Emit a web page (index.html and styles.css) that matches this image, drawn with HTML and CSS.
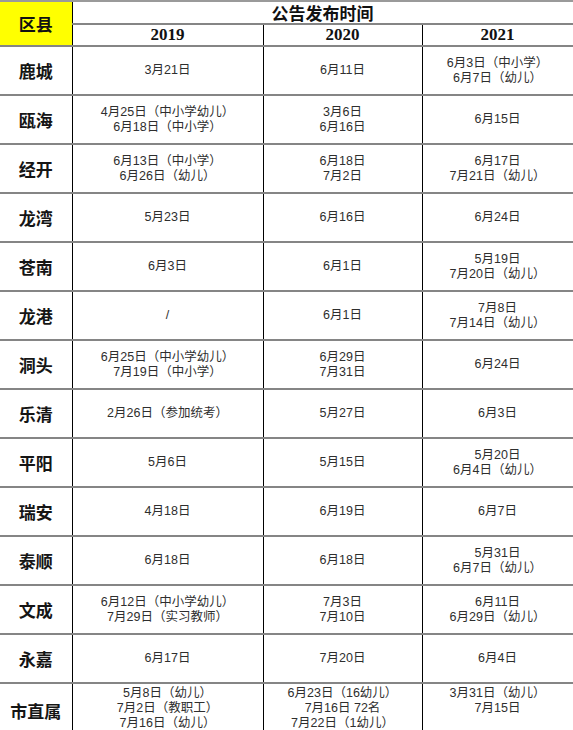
FILE: index.html
```html
<!DOCTYPE html>
<html lang="zh">
<head>
<meta charset="utf-8">
<title>公告发布时间</title>
<link rel="stylesheet" href="styles.css">
</head>
<body>
<table class="sched">
  <colgroup>
    <col class="c-area"><col class="c-y1"><col class="c-y2"><col class="c-y3">
  </colgroup>
  <thead>
    <tr class="h1">
      <th class="area-head" rowspan="2">区县</th>
      <th class="title" colspan="3">公告发布时间</th>
    </tr>
    <tr class="h2">
      <th class="year">2019</th>
      <th class="year">2020</th>
      <th class="year">2021</th>
    </tr>
  </thead>
  <tbody>
    <tr class="row"><th class="area">鹿城</th><td>3月21日</td><td>6月11日</td><td>6月3日（中小学）<br>6月7日（幼儿）</td></tr>
    <tr class="row"><th class="area">瓯海</th><td>4月25日（中小学幼儿）<br>6月18日（中小学）</td><td>3月6日<br>6月16日</td><td>6月15日</td></tr>
    <tr class="row"><th class="area">经开</th><td>6月13日（中小学）<br>6月26日（幼儿）</td><td>6月18日<br>7月2日</td><td>6月17日<br>7月21日（幼儿）</td></tr>
    <tr class="row"><th class="area">龙湾</th><td>5月23日</td><td>6月16日</td><td>6月24日</td></tr>
    <tr class="row"><th class="area">苍南</th><td>6月3日</td><td>6月1日</td><td>5月19日<br>7月20日（幼儿）</td></tr>
    <tr class="row"><th class="area">龙港</th><td>/</td><td>6月1日</td><td>7月8日<br>7月14日（幼儿）</td></tr>
    <tr class="row"><th class="area">洞头</th><td>6月25日（中小学幼儿）<br>7月19日（中小学）</td><td>6月29日<br>7月31日</td><td>6月24日</td></tr>
    <tr class="row"><th class="area">乐清</th><td>2月26日（参加统考）</td><td>5月27日</td><td>6月3日</td></tr>
    <tr class="row"><th class="area">平阳</th><td>5月6日</td><td>5月15日</td><td>5月20日<br>6月4日（幼儿）</td></tr>
    <tr class="row"><th class="area">瑞安</th><td>4月18日</td><td>6月19日</td><td>6月7日</td></tr>
    <tr class="row"><th class="area">泰顺</th><td>6月18日</td><td>6月18日</td><td>5月31日<br>6月7日（幼儿）</td></tr>
    <tr class="row"><th class="area">文成</th><td>6月12日（中小学幼儿）<br>7月29日（实习教师）</td><td>7月3日<br>7月10日</td><td>6月11日<br>6月29日（幼儿）</td></tr>
    <tr class="row"><th class="area">永嘉</th><td>6月17日</td><td>7月20日</td><td>6月4日</td></tr>
    <tr class="row last"><th class="area">市直属</th><td>5月8日（幼儿）<br>7月2日（教职工）<br>7月16日（幼儿）</td><td>6月23日（16幼儿）<br>7月16日 72名<br>7月22日（1幼儿）</td><td>3月31日（幼儿）<br>7月15日</td></tr>
  </tbody>
</table>
</body>
</html>
```

FILE: styles.css
```css
html, body {
  margin: 0;
  padding: 0;
  background: #ffffff;
  overflow: hidden;
  height: 730px;
}

.sched {
  width: 573px;
  table-layout: fixed;
  border-collapse: collapse;
  font-family: "Liberation Sans", "Noto Sans CJK SC", sans-serif;
  color: #2a2a2a;
}

.c-area { width: 72px; }
.c-y1 { width: 191px; }
.c-y2 { width: 159px; }
.c-y3 { width: 151px; }

.sched th,
.sched td {
  padding: 0;
  text-align: center;
  vertical-align: middle;
  border-top: 2px solid #858585;
  border-bottom: 2px solid #858585;
  border-left: 1.5px solid #000;
  border-right: 1.5px solid #000;
}

.sched tr > :first-child { border-left: 0; }

.h1 { height: 23px; }
.h2 { height: 22px; }
.h1 th { border-top-color: #9a9a9a; }

.area-head {
  background: #ffff00;
  font-family: "Noto Sans CJK SC", sans-serif;
  font-weight: 700;
  font-size: 17px;
  color: #111;
}

.title {
  font-family: "Noto Sans CJK SC", sans-serif;
  font-weight: 700;
  font-size: 17px;
  line-height: 18px;
  color: #111;
}

.year {
  font-family: "Liberation Serif", serif;
  font-weight: 700;
  font-size: 17px;
  line-height: 18px;
  color: #111;
}

.row { height: 49px; }

.area {
  font-family: "Noto Sans CJK SC", sans-serif;
  font-weight: 700;
  font-size: 17px;
  color: #151515;
}

.row td {
  font-size: 12.5px;
  line-height: 15px;
  color: #2e2e2e;
}

.row.last { height: 60px; }
.row.last td,
.row.last th {
  vertical-align: top;
  padding-top: 2px;
}
.row.last th { padding-top: 14px; }
```
